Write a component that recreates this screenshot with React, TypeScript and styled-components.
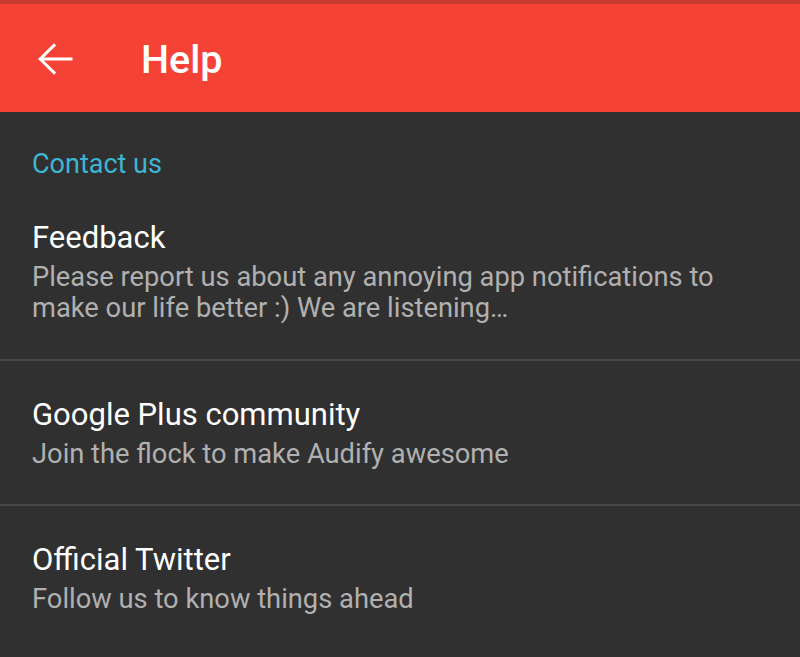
import React from "react";
import styled, { createGlobalStyle } from "styled-components";

const Global = createGlobalStyle`
  html, body { margin: 0; padding: 0; background: #303030; }
  body { font-family: Roboto, "Noto Sans", "Liberation Sans", sans-serif; -webkit-font-smoothing: antialiased; }
  * { box-sizing: border-box; }
`;

const Screen = styled.div`
  width: 800px;
  height: 657px;
  background: #303030;
  overflow: hidden;
  display: flex;
  flex-direction: column;
`;

const StatusStrip = styled.div`
  height: 4px;
  background: #c5392f;
`;

const AppBar = styled.header`
  height: 108px;
  background: #f44336;
  display: flex;
  align-items: center;
  padding-left: 31px;
`;

const BackButton = styled.button`
  width: 48px;
  height: 48px;
  border: 0;
  padding: 0;
  margin-top: 2px;
  background: transparent;
  display: flex;
  align-items: center;
  justify-content: center;
  color: #fff;
`;

const Title = styled.h1`
  margin: 4px 0 0 62px;
  font-size: 39.5px;
  font-weight: 500;
  color: #fff;
  line-height: 48px;
`;

const Category = styled.div`
  padding: 36px 32px 0 32px;
  font-size: 27px;
  line-height: 32px;
  color: #3eb5d1;
`;

const Row = styled.div<{ $pt: number; $pb: number; $last?: boolean }>`
  padding: ${(p) => p.$pt}px 32px ${(p) => p.$pb}px 32px;
  border-bottom: ${(p) => (p.$last ? "0" : "2px solid #474747")};
`;

const ItemTitle = styled.div`
  font-size: 31px;
  line-height: 36px;
  color: #ffffff;
`;

const ItemText = styled.div`
  font-size: 27.3px;
  line-height: 31px;
  color: #b0b0b0;
  margin-top: 6px;
`;

type RowData = { title: string; text: string; pt: number; pb: number; last?: boolean };

const rows: RowData[] = [
  {
    title: "Feedback",
    text: "Please report us about any annoying app notifications to make our life better :) We are listening…",
    pt: 40,
    pb: 35,
  },
  { title: "Google Plus community", text: "Join the flock to make Audify awesome", pt: 36, pb: 34 },
  { title: "Official Twitter", text: "Follow us to know things ahead", pt: 36, pb: 34, last: true },
];

export default function App() {
  return (
    <Screen>
      <Global />
      <StatusStrip />
      <AppBar>
        <BackButton aria-label="Back">
          <svg width="48" height="48" viewBox="0 0 24 24" fill="none">
            <path d="M20 12H4.8M11.5 5.2L4.6 12l6.9 6.8" stroke="#fff" strokeWidth="1.5" strokeLinecap="square" />
          </svg>
        </BackButton>
        <Title>Help</Title>
      </AppBar>
      <Category>Contact us</Category>
      {rows.map((r) => (
        <Row key={r.title} $pt={r.pt} $pb={r.pb} $last={r.last}>
          <ItemTitle>{r.title}</ItemTitle>
          <ItemText>{r.text}</ItemText>
        </Row>
      ))}
    </Screen>
  );
}
